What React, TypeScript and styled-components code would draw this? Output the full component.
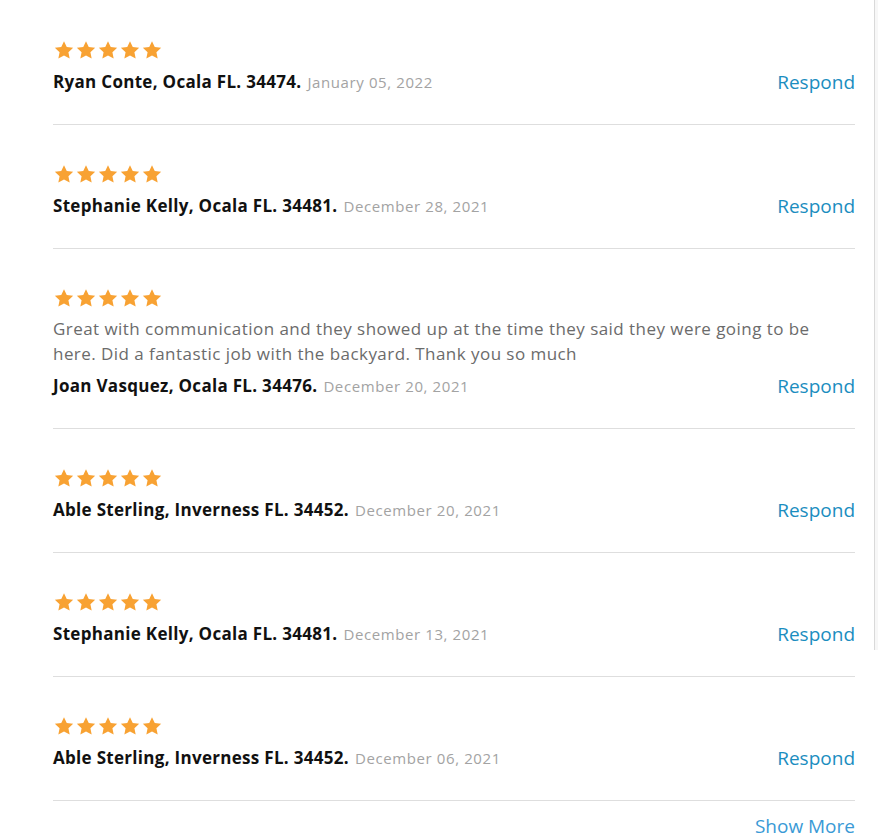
import styled, { createGlobalStyle } from "styled-components";

const GlobalStyle = createGlobalStyle`
  html, body {
    margin: 0;
    padding: 0;
    background: #fff;
  }
  body {
    font-family: "Open Sans", Lato, Arial, sans-serif;
    overflow: hidden;
  }
`;

const Page = styled.div`
  display: flex;
  align-items: flex-start;
  width: 878px;
  height: 833px;
  overflow: hidden;
`;

const Main = styled.div`
  width: 874px;
  box-sizing: border-box;
  padding: 1px 19px 0 53px;
`;

const Track = styled.div`
  width: 3px;
  height: 650px;
  border-left: 1px solid #d9d9d9;
  background: #f7f7f7;
`;

const Review = styled.div`
  padding: 39px 0 30px;
  border-bottom: 1px solid #dedede;
`;

const Stars = styled.div`
  display: flex;
  gap: 2px;
  height: 20px;
  margin-left: 1px;
  svg {
    width: 20px;
    height: 20px;
    display: block;
  }
`;

const Text = styled.p`
  margin: 8px 0 0;
  font-size: 17px;
  line-height: 25px;
  letter-spacing: 0.45px;
  color: #6b6b6b;
  font-weight: 400;
`;

const Footer = styled.div<{ $withText?: boolean }>`
  display: flex;
  justify-content: space-between;
  align-items: baseline;
  margin-top: ${(p) => (p.$withText ? "7px" : "9px")};
  line-height: 24px;
`;

const Author = styled.div`
  font-size: 17px;
  font-weight: 700;
  letter-spacing: 0.3px;
  color: #111;
`;

const DateText = styled.span`
  font-size: 15px;
  font-weight: 400;
  letter-spacing: 0.6px;
  color: #a3a3a3;
  margin-left: 6px;
`;

const Respond = styled.a`
  font-size: 19px;
  color: #1b8dbf;
  cursor: pointer;
  position: relative;
  top: 1px;
`;

const ShowMore = styled.div`
  display: flex;
  justify-content: flex-end;
  padding-top: 13px;
  font-size: 19px;
  line-height: 24px;
  color: #3a9ad6;
`;

const Star = () => (
  <svg viewBox="0 0 24 24">
    <path
      fill="#f8a233"
      d="M12 1.5l3.3 7 7.7.9-5.7 5.3 1.5 7.6L12 18.5l-6.8 3.8 1.5-7.6L1 9.4l7.7-.9z"
    />
  </svg>
);

interface ReviewItem {
  name: string;
  date: string;
  text?: string;
}

const reviews: ReviewItem[] = [
  { name: "Ryan Conte, Ocala FL. 34474.", date: "January 05, 2022" },
  { name: "Stephanie Kelly, Ocala FL. 34481.", date: "December 28, 2021" },
  {
    name: "Joan Vasquez, Ocala FL. 34476.",
    date: "December 20, 2021",
    text: "Great with communication and they showed up at the time they said they were going to be here. Did a fantastic job with the backyard. Thank you so much",
  },
  { name: "Able Sterling, Inverness FL. 34452.", date: "December 20, 2021" },
  { name: "Stephanie Kelly, Ocala FL. 34481.", date: "December 13, 2021" },
  { name: "Able Sterling, Inverness FL. 34452.", date: "December 06, 2021" },
];

export default function App() {
  return (
    <>
      <GlobalStyle />
      <Page>
        <Main>
          {reviews.map((r, i) => (
            <Review key={i}>
              <Stars>
                {[0, 1, 2, 3, 4].map((s) => (
                  <Star key={s} />
                ))}
              </Stars>
              {r.text && <Text>{r.text}</Text>}
              <Footer $withText={!!r.text}>
                <Author>
                  {r.name}
                  <DateText>{r.date}</DateText>
                </Author>
                <Respond>Respond</Respond>
              </Footer>
            </Review>
          ))}
          <ShowMore>Show More</ShowMore>
        </Main>
        <Track />
      </Page>
    </>
  );
}
